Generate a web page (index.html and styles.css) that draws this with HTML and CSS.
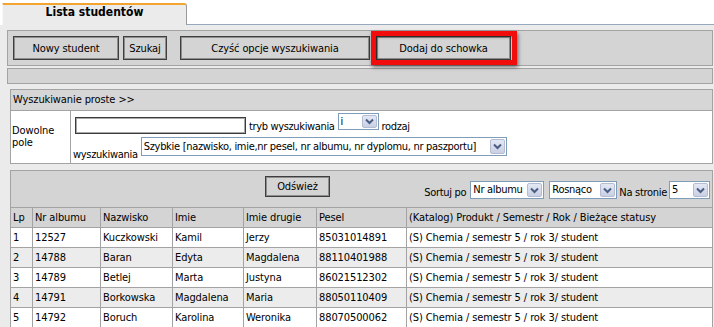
FILE: index.html
```html
<!DOCTYPE html>
<html lang="pl">
<head>
<meta charset="utf-8">
<title>Lista studentów</title>
<link rel="stylesheet" href="styles.css">
</head>
<body>
<div class="tabs">
  <div class="tab">Lista studentów</div>
  <div class="tab-line"></div>
</div>
<div class="panel">
  <div class="toolbar">
    <button class="btn btn-new">Nowy student</button>
    <button class="btn btn-find">Szukaj</button>
    <button class="btn btn-clear">Czyść opcje wyszukiwania</button>
    <button class="btn btn-clip highlight">Dodaj do schowka</button>
  </div>
  <div class="bar"></div>
  <div class="search">
    <div class="search-head">Wyszukiwanie proste &gt;&gt;</div>
    <div class="search-body">
      <div class="search-label">Dowolne pole</div>
      <div class="search-fields">
        <div class="line line1">
          <input class="input" type="text" value="">
          <span class="txt t1">tryb wyszukiwania</span>
          <span class="sel sel-mode"><span class="val">i</span><span class="arrow"><svg width="9" height="7" viewBox="0 0 9 7"><path d="M1 1.5 L4.5 5 L8 1.5" fill="none" stroke="#4a5d82" stroke-width="2"/></svg></span></span>
          <span class="txt t1">rodzaj</span>
        </div>
        <div class="line line2">
          <span class="txt t2">wyszukiwania</span>
          <span class="sel sel-kind"><span class="val">Szybkie [nazwisko, imie,nr pesel, nr albumu, nr dyplomu, nr paszportu]</span><span class="arrow"><svg width="9" height="7" viewBox="0 0 9 7"><path d="M1 1.5 L4.5 5 L8 1.5" fill="none" stroke="#4a5d82" stroke-width="2"/></svg></span></span>
        </div>
      </div>
    </div>
  </div>
  <div class="results">
    <div class="results-top">
      <button class="btn btn-refresh">Odśwież</button>
      <div class="sort">
        <span class="txt t3">Sortuj po</span>
        <span class="sel sel-by"><span class="val">Nr albumu</span><span class="arrow"><svg width="9" height="7" viewBox="0 0 9 7"><path d="M1 1.5 L4.5 5 L8 1.5" fill="none" stroke="#4a5d82" stroke-width="2"/></svg></span></span>
        <span class="sel sel-order"><span class="val">Rosnąco</span><span class="arrow"><svg width="9" height="7" viewBox="0 0 9 7"><path d="M1 1.5 L4.5 5 L8 1.5" fill="none" stroke="#4a5d82" stroke-width="2"/></svg></span></span>
        <span class="txt t3 t-per">Na stronie</span>
        <span class="sel sel-per"><span class="val">5</span><span class="arrow"><svg width="9" height="7" viewBox="0 0 9 7"><path d="M1 1.5 L4.5 5 L8 1.5" fill="none" stroke="#4a5d82" stroke-width="2"/></svg></span></span>
      </div>
    </div>
    <table class="grid">
      <colgroup>
        <col class="c-lp"><col class="c-album"><col class="c-name"><col class="c-first"><col class="c-second"><col class="c-pesel"><col>
      </colgroup>
      <thead>
        <tr><th>Lp</th><th>Nr albumu</th><th>Nazwisko</th><th>Imie</th><th>Imie drugie</th><th>Pesel</th><th>(Katalog) Produkt / Semestr / Rok / Bieżące statusy</th></tr>
      </thead>
      <tbody>
        <tr><td>1</td><td>12527</td><td>Kuczkowski</td><td>Kamil</td><td>Jerzy</td><td>85031014891</td><td>(S) Chemia / semestr 5 / rok 3/ student</td></tr>
        <tr><td>2</td><td>14788</td><td>Baran</td><td>Edyta</td><td>Magdalena</td><td>88110401988</td><td>(S) Chemia / semestr 5 / rok 3/ student</td></tr>
        <tr><td>3</td><td>14789</td><td>Betlej</td><td>Marta</td><td>Justyna</td><td>86021512302</td><td>(S) Chemia / semestr 5 / rok 3/ student</td></tr>
        <tr><td>4</td><td>14791</td><td>Borkowska</td><td>Magdalena</td><td>Maria</td><td>88050110409</td><td>(S) Chemia / semestr 5 / rok 3/ student</td></tr>
        <tr><td>5</td><td>14792</td><td>Boruch</td><td>Karolina</td><td>Weronika</td><td>88070500062</td><td>(S) Chemia / semestr 5 / rok 3/ student</td></tr>
      </tbody>
    </table>
  </div>
</div>
</body>
</html>
```

FILE: styles.css
```css
* { box-sizing: border-box; }

body {
  margin: 0;
  background: #ffffff;
  font-family: "DejaVu Sans Condensed", "DejaVu Sans", sans-serif;
  font-stretch: condensed;
  font-size: 11px;
  letter-spacing: -0.1px;
  color: #000;
  overflow: hidden;
}

/* tabs */
.tabs {
  display: flex;
  height: 25px;
}
.tab {
  margin: 3px 0 0 2px;
  width: 185px;
  height: 22px;
  background: #ebebeb;
  border-top: 2px solid #f2a42e;
  border-right: 1px solid #9a9a9a;
  border-left: 1px solid #f7f7f7;
  border-top-right-radius: 3px;
  font-weight: bold;
  font-size: 12px;
  letter-spacing: 0;
  line-height: 14px;
  text-align: center;
}
.tab-line {
  flex: 1;
  border-bottom: 1px solid #97a9bc;
}

/* panel */
.panel {
  background: #ebebeb;
  padding: 5px 1px 0 7px;
  min-height: 302px;
}

.toolbar {
  display: flex;
  height: 36px;
  padding: 5px 0 5px 5px;
  background: #d4d4d4;
  border: 1px solid #a3a3a3;
}

.btn {
  font: inherit;
  letter-spacing: inherit;
  color: #000;
  height: 24px;
  padding: 0;
  background: #d4d4d4;
  border: 1px solid #3e3e3e;
  box-shadow: inset 0 0 0 1px #8e8e8e;
  text-align: center;
}
.btn-new { width: 106px; }
.btn-find { width: 44px; margin-left: 4px; }
.btn-clear { width: 190px; margin-left: 13px; }
.btn-clip { width: 135px; margin-left: 6px; }

.highlight { position: relative; }
.highlight::after {
  content: "";
  position: absolute;
  left: -6px;
  top: -6px;
  right: -7px;
  bottom: -6px;
  border: 5px solid #f20c0c;
  box-shadow: 1px 2px 4px rgba(0, 0, 0, 0.55), inset 1px 1px 3px rgba(0, 0, 0, 0.45);
}

.bar {
  margin-top: 2px;
  height: 16px;
  background: #d4d4d4;
  border: 1px solid #a3a3a3;
}

/* search */
.search {
  margin: 5px 0 0 3px;
  border: 1px solid #a3a3a3;
}
.search-head {
  height: 21px;
  line-height: 20px;
  padding-left: 2px;
  background: #d6d6d6;
  border-bottom: 1px solid #a3a3a3;
}
.search-body {
  display: flex;
  height: 52px;
  background: #fff;
}
.search-label {
  width: 60px;
  padding-left: 1px;
  border-right: 1px solid #a3a3a3;
  display: flex;
  align-items: center;
  line-height: 12px;
}
.search-fields {
  flex: 1;
  padding-left: 2px;
}
.line {
  display: flex;
  align-items: flex-start;
  white-space: nowrap;
}
.line1 { height: 25px; }
.line2 { height: 27px; }

.txt { line-height: 13px; white-space: nowrap; }
.t1 { margin: 9px 0 0 3px; letter-spacing: -0.35px; }
.t2 { margin-top: 12px; letter-spacing: -0.3px; }

.input {
  margin: 6px 0 0 2px;
  width: 171px;
  height: 17px;
  padding: 0;
  border: 1px solid #3c3c3c;
  box-shadow: inset 0 0 0 1px #a8a8a8;
  background: #fff;
  font: inherit;
}

/* custom select */
.sel {
  display: flex;
  border: 1px solid #7f9db9;
  background: #fff;
}
.sel .val {
  flex: 1;
  min-width: 0;
  padding-left: 2px;
  overflow: hidden;
  white-space: nowrap;
}
.sel .arrow {
  flex: none;
  width: 15px;
  margin: 1px;
  border: 1px solid #b4bcd3;
  border-radius: 2px;
  background: linear-gradient(#e4e8f4, #c9d0e4);
  display: flex;
  align-items: center;
  justify-content: center;
}
.sel-mode { margin: 2px 0 0 3px; width: 41px; height: 17px; }
.sel-mode .val { line-height: 15px; }
.sel-kind { margin: 1px 0 0 3px; width: 366px; height: 19px; }
.sel-kind .val { line-height: 17px; letter-spacing: -0.3px; }

/* results */
.results {
  margin: 6px 0 0 3px;
}
.results-top {
  display: flex;
  align-items: flex-start;
  height: 37px;
  background: #d4d4d4;
  border: 1px solid #a3a3a3;
  border-bottom: 0;
}
.btn-refresh {
  margin: 5px 0 0 254px;
  width: 65px;
  height: 21px;
}
.sort {
  margin-left: auto;
  display: flex;
  align-items: flex-start;
  padding-right: 2px;
}
.t3 { margin-top: 15px; letter-spacing: -0.3px; }
.sel-by, .sel-order, .sel-per { margin-top: 10px; height: 18px; }
.sel-by .val, .sel-order .val, .sel-per .val { line-height: 16px; letter-spacing: -0.3px; }
.sel-by { width: 74px; margin-left: 4px; }
.sel-order { width: 68px; margin-left: 5px; }
.t-per { margin-left: 2px; }
.sel-per { width: 41px; margin-left: 2px; }

.grid {
  width: 100%;
  border-collapse: collapse;
  table-layout: fixed;
}
.c-lp { width: 22px; }
.c-album { width: 68px; }
.c-name { width: 72px; }
.c-first { width: 71px; }
.c-second { width: 73px; }
.c-pesel { width: 90px; }

.grid th, .grid td {
  border: 1px solid #a3a3a3;
  height: 20px;
  padding: 0 2px;
  font-weight: normal;
  text-align: left;
  white-space: nowrap;
  overflow: hidden;
  vertical-align: middle;
}
.grid thead tr { background: #d4d4d4; }
.grid tbody tr { background: #fff; }
.grid tbody tr:nth-child(even) { background: #ececec; }
```
